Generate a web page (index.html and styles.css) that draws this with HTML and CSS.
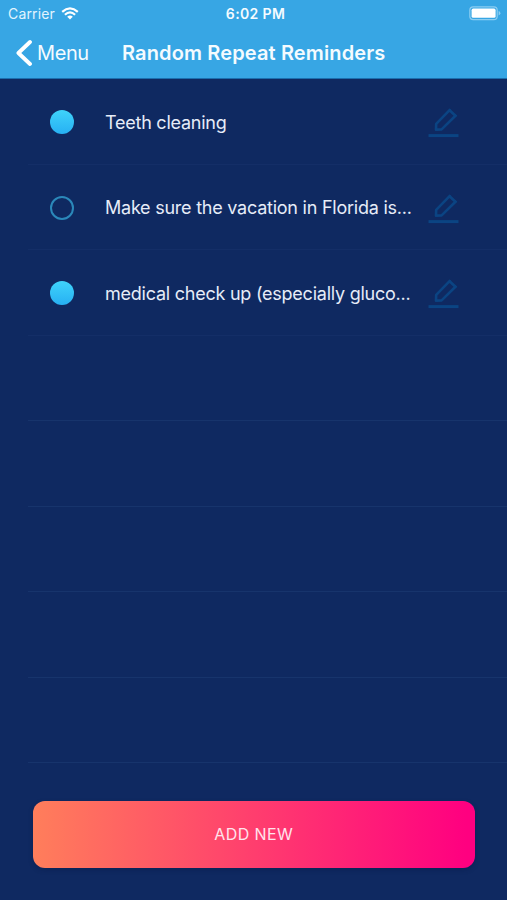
FILE: index.html
```html
<!DOCTYPE html>
<html lang="en">
  <head>
    <meta charset="utf-8">
    <title>Random Repeat Reminders</title>
    <link rel="stylesheet" href="styles.css">
  </head>
  <body>
    <svg class="defs" width="0" height="0">
      <symbol id="pencil" viewBox="0 0 32 32">
        <path d="M8 23.6 L8.2 17.8 L21.6 4.2 L27.4 9.8 L13.6 23.4 Z" />
        <path d="M21.6 4.2 L22.4 3.2 M27.4 9.8 L28.4 8.8" />
        <path class="line" d="M0.5 29.6 H30.5" />
      </symbol>
    </svg>

    <header>
      <div class="status">
        <div class="carrier">
          <span>Carrier</span>
          <svg class="wifi" width="18" height="13" viewBox="0 0 18 13">
            <path d="M1.2 4.8 Q9 -2 16.8 4.8" />
            <path d="M3.9 7.7 Q9 3.2 14.1 7.7" />
            <path class="dot" d="M6.2 9.7 Q9 7.4 11.8 9.7 L9 12.6 Z" />
          </svg>
        </div>
        <span class="time">6:02 PM</span>
        <svg class="battery" width="32" height="15" viewBox="0 0 32 15">
          <rect class="shell" x="0.8" y="0.8" width="27.4" height="12.8" rx="3.4" />
          <rect class="level" x="2.6" y="2.6" width="24" height="9.2" rx="1.6" />
          <path class="cap" d="M29.6 5 Q31.4 5.6 31.4 7.2 Q31.4 8.8 29.6 9.4 Z" />
        </svg>
      </div>
      <nav>
        <a class="back">
          <svg width="17" height="28" viewBox="0 0 17 28">
            <path d="M15 3 L3.4 14 L15 25" />
          </svg>
          <span>Menu</span>
        </a>
        <h1>Random Repeat Reminders</h1>
      </nav>
    </header>

    <ul>
      <li>
        <span class="check done"></span>
        <p>Teeth cleaning</p>
        <svg class="edit"><use href="#pencil" /></svg>
      </li>
      <li>
        <span class="check"></span>
        <p>Make sure the vacation in Florida is...</p>
        <svg class="edit"><use href="#pencil" /></svg>
      </li>
      <li>
        <span class="check done"></span>
        <p>medical check up (especially gluco...</p>
        <svg class="edit"><use href="#pencil" /></svg>
      </li>
      <li></li>
      <li></li>
      <li></li>
      <li></li>
      <li></li>
    </ul>

    <button>ADD NEW</button>
  </body>
</html>
```

FILE: styles.css
```css
* {
    box-sizing: border-box;
}

body {
    margin: 0;
    height: 900px;
    overflow: hidden;
    background: #0f2961;
    color: #e6ecf8;
    font-family: Inter, "Liberation Sans", sans-serif;
}

.defs {
    position: absolute;
}

header {
    height: 79px;
    background: #37a6e4;
    border-bottom: 1px solid #1b6fae;
    color: #f4fbff;
}

.status {
    display: grid;
    grid-template-columns: 1fr 62px 1fr;
    align-items: center;
    height: 26px;
    padding: 0 6px 0 8px;
    font-size: 14px;
}

.carrier {
    display: flex;
    align-items: center;
    gap: 6px;
    color: #e2f4fe;
    letter-spacing: 0.15px;
}

.wifi path {
    fill: none;
    stroke: #fff;
    stroke-width: 2.2;
}

.wifi .dot {
    fill: #fff;
    stroke: none;
}

.time {
    padding-left: 2px;
    font-size: 14px;
    font-weight: 600;
    letter-spacing: 0.35px;
    text-align: center;
    white-space: nowrap;
}

.battery {
    justify-self: end;
}

.shell {
    fill: none;
    stroke: #8bcdf1;
    stroke-width: 1.2;
}

.level {
    fill: #fff;
}

.cap {
    fill: #8bcdf1;
}

nav {
    display: flex;
    align-items: center;
    height: 53px;
    padding-left: 15px;
}

.back {
    display: flex;
    align-items: center;
    gap: 5px;
    width: 107px;
    font-size: 20px;
    letter-spacing: -0.4px;
}

.back path {
    fill: none;
    stroke: #fff;
    stroke-width: 3.8;
    stroke-linecap: round;
    stroke-linejoin: round;
}

h1 {
    margin: 0;
    font-size: 20px;
    font-weight: 600;
    letter-spacing: 0.13px;
    white-space: nowrap;
}

ul {
    margin: 0;
    padding: 0.4px 0 0 28px;
    list-style: none;
}

li {
    display: flex;
    align-items: center;
    height: 85.5px;
    padding: 1px 0 0 22px;
    border-bottom: 1px solid #17346c;
}

/* rows with a reminder have a fainter separator */
li:nth-child(-n+3) {
    border-color: #142e67;
}

.check {
    width: 24px;
    height: 24px;
    border: 2px solid #2b88ba;
    border-radius: 50%;
}

.done {
    border: none;
    background: linear-gradient(#3fd3fa, #27b0f3);
}

li p {
    width: 322.5px;
    margin: 0 0 0 31px;
    font-size: 18px;
    letter-spacing: -0.24px;
    white-space: nowrap;
}

.edit {
    width: 32px;
    height: 32px;
    fill: none;
    stroke: #0b4483;
    stroke-width: 2.6;
    stroke-linejoin: round;
}

.line {
    stroke-width: 3;
}

button {
    display: block;
    width: 442.5px;
    height: 67px;
    margin: 37.6px 0 0 32.5px;
    border: none;
    border-radius: 12px;
    background: linear-gradient(to right, #ff7e5b, #ff0080 98%);
    box-shadow: 0 2px 5px rgba(5, 20, 60, 0.3);
    color: #ffe3ec;
    font-family: inherit;
    font-size: 16px;
    letter-spacing: 0.4px;
}
```
